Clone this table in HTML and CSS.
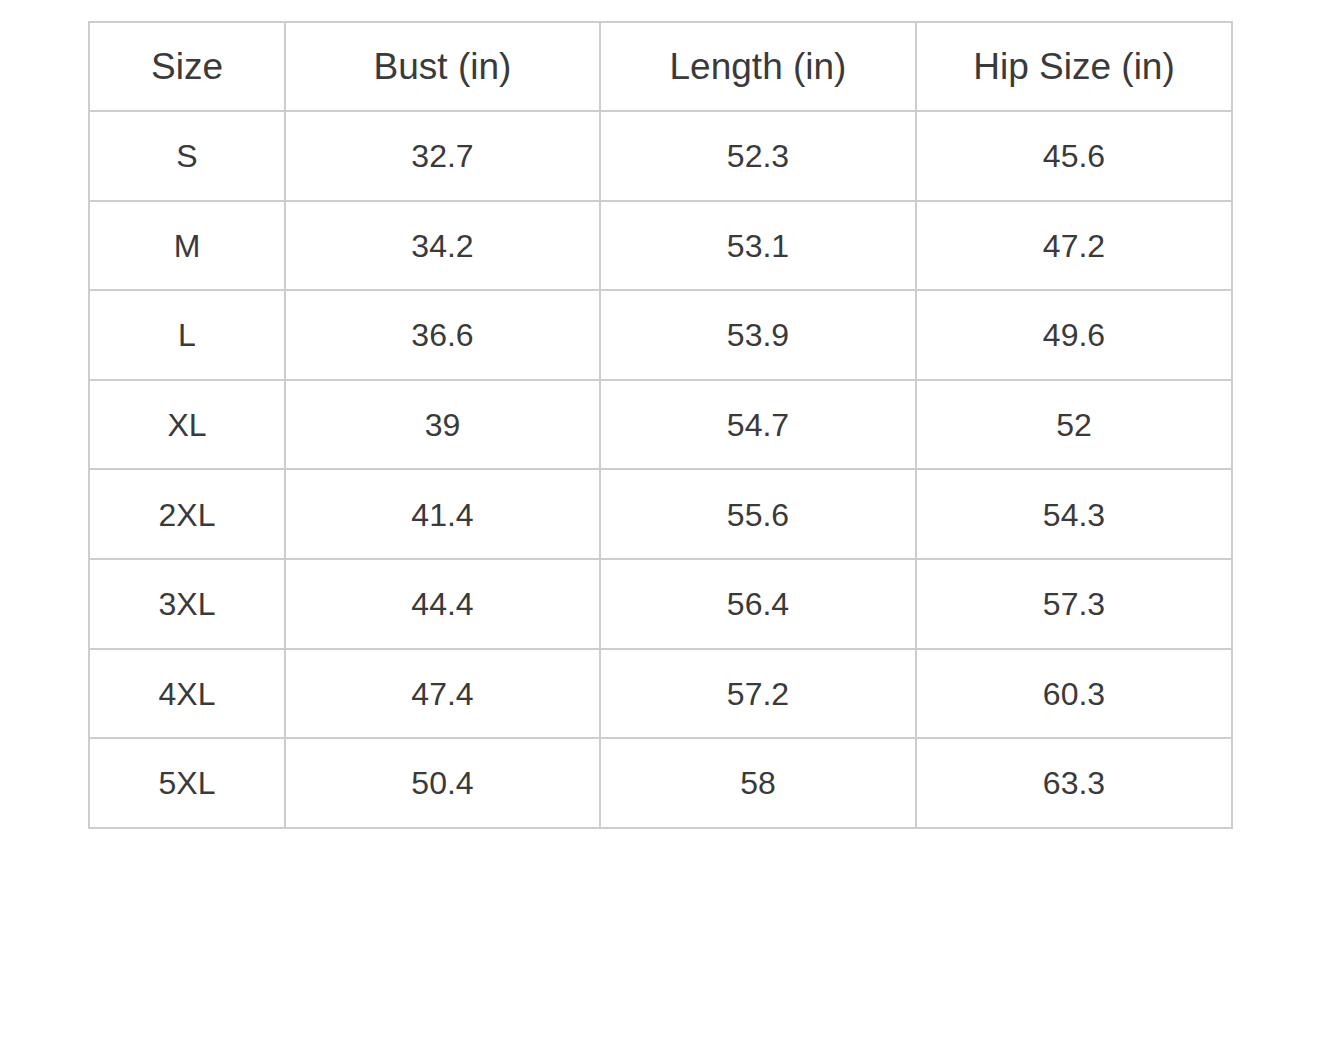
FILE: index.html
```html
<!DOCTYPE html>
<html>
<head>
<meta charset="utf-8">
<link rel="stylesheet" href="styles.css">
</head>
<body>
<table class="size-table">
  <colgroup>
    <col class="c1"><col class="c2"><col class="c3"><col class="c4">
  </colgroup>
  <thead>
    <tr><th>Size</th><th>Bust (in)</th><th>Length (in)</th><th>Hip Size (in)</th></tr>
  </thead>
  <tbody>
    <tr><td>S</td><td>32.7</td><td>52.3</td><td>45.6</td></tr>
    <tr><td>M</td><td>34.2</td><td>53.1</td><td>47.2</td></tr>
    <tr><td>L</td><td>36.6</td><td>53.9</td><td>49.6</td></tr>
    <tr><td>XL</td><td>39</td><td>54.7</td><td>52</td></tr>
    <tr><td>2XL</td><td>41.4</td><td>55.6</td><td>54.3</td></tr>
    <tr><td>3XL</td><td>44.4</td><td>56.4</td><td>57.3</td></tr>
    <tr><td>4XL</td><td>47.4</td><td>57.2</td><td>60.3</td></tr>
    <tr><td>5XL</td><td>50.4</td><td>58</td><td>63.3</td></tr>
  </tbody>
</table>
</body>
</html>
```
FILE: styles.css
```css
html, body {
  margin: 0;
  padding: 0;
  background: #fff;
}
body {
  padding: 21px 0 0 88px;
  font-family: "Liberation Sans", Arial, sans-serif;
  color: #3a3a3a;
}
.size-table {
  border-collapse: collapse;
  width: 1143px;
  table-layout: fixed;
}
.c1 { width: 196px; }
.c2 { width: 315px; }
.c3 { width: 316px; }
.c4 { width: 316px; }
.size-table th,
.size-table td {
  border: 2px solid #cdcdcd;
  text-align: center;
  vertical-align: middle;
  padding: 0;
}
.size-table th {
  font-weight: normal;
  font-size: 37px;
  height: 87px;
}
.size-table td {
  font-size: 32px;
  height: 85.6px;
  padding-top: 2px;
}
```
